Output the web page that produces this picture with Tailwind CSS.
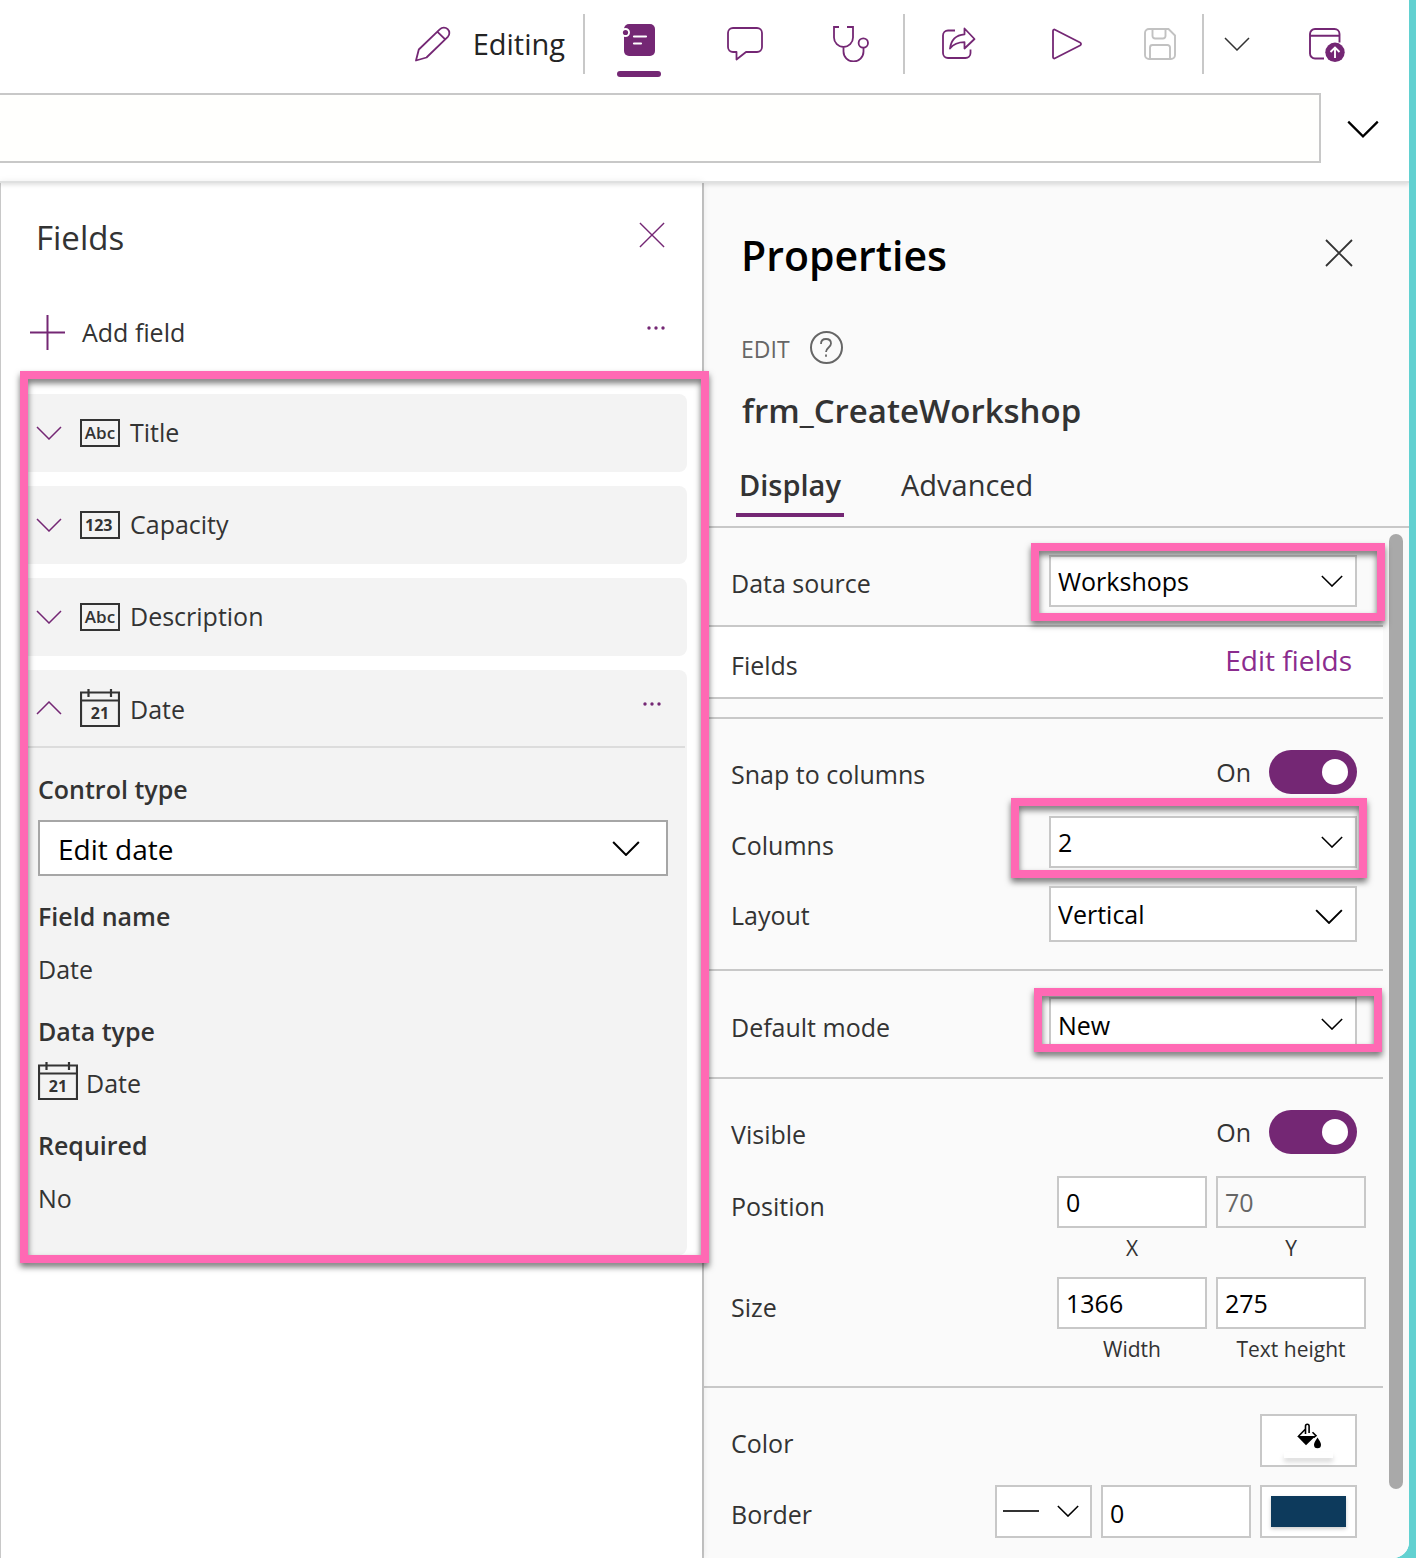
<!DOCTYPE html>
<html lang="en">
<head>
<meta charset="utf-8">
<meta name="viewport" content="width=device-width, initial-scale=1">
<title>Form editor</title>
<script src="https://cdn.jsdelivr.net/npm/@tailwindcss/browser@4"></script>
</head>
<body class="bg-[#62d1d1] font-['Open_Sans','Noto_Sans',sans-serif] text-[25px] text-[#333]">
<svg class="hidden">
  <symbol id="down" viewBox="0 0 26 14"><path d="M1 1l12 12L25 1" fill="none" stroke="currentColor"/></symbol>
  <symbol id="cross" viewBox="0 0 28 28"><path d="M1 1l26 26M27 1L1 27" fill="none" stroke="currentColor"/></symbol>
  <symbol id="dots" viewBox="0 0 18 4"><circle cx="2" cy="2" r="1.7"/><circle cx="9" cy="2" r="1.7"/><circle cx="16" cy="2" r="1.7"/></symbol>
  <symbol id="calendar" viewBox="0 0 40 38"><path d="M1 3.500h38V37H1zM1 11.500h38M8.500 0v8M31 0v8" fill="none" stroke="currentColor" stroke-width="2.200"/></symbol>
</svg>
<div class="mr-[7px] flex min-h-screen flex-col overflow-hidden rounded-br-2xl bg-white">

  <header class="relative z-10 border-b-2 border-[#dfe0e0] pb-[18px] shadow-[0_2px_4px_rgba(0,0,0,0.12)]">
    <div class="mb-[5px] flex h-[88px] items-center justify-end pr-16 text-[#742774]">
      <button class="mr-[18px] flex items-center gap-[22px]">
        <svg class="size-9" viewBox="0 0 36 36" fill="none" stroke="currentColor" stroke-width="1.800" stroke-linejoin="round"><path d="M1 34.500l2.800-11L25 3.200a5.300 5.300 0 0 1 7.800 7.600L11.500 31.500zM22.500 5.800l7.700 7.600"/></svg>
        <span class="text-[29px] leading-9 text-[#242424]">Editing</span>
      </button>
      <span class="h-[60px] w-0.5 bg-[#c8c8c8]"></span>
      <div class="flex items-center gap-[62px] pr-[30px] pl-8">
        <button class="flex w-11 flex-col items-center gap-[15px] pt-[13px]" aria-label="Properties pane">
          <svg class="h-8 w-[34px]" viewBox="0 0 34 32"><rect x="2" width="31" height="32" rx="5" fill="currentColor"/><circle cx="3.500" cy="8.500" r="4.500" fill="#fff"/><circle cx="3.500" cy="8.500" r="2.600" fill="currentColor"/><path d="M12 12.500h12M12 19.500h7" stroke="#fff" stroke-width="2.200" stroke-linecap="round"/></svg>
          <span class="h-1.5 w-11 rounded-full bg-[#742774]"></span>
        </button>
        <button class="flex w-11 justify-center" aria-label="Comments">
          <svg class="size-9" viewBox="0 0 36 36" fill="none" stroke="currentColor" stroke-width="1.800" stroke-linejoin="round"><path d="M6 2h24a5 5 0 0 1 5 5v14a5 5 0 0 1-5 5H19l-9.500 7.500V26H6a5 5 0 0 1-5-5V7a5 5 0 0 1 5-5z"/></svg>
        </button>
        <button class="flex w-11 justify-center" aria-label="App checker">
          <svg class="size-9" viewBox="0 0 36 36" fill="none" stroke="currentColor" stroke-width="1.800"><path d="M6 1H1v10.500a9.500 9.500 0 0 0 19 0V1h-6M10.500 21v4.500a10 10 0 0 0 20 0V22"/><circle cx="30.300" cy="17" r="4.700"/></svg>
        </button>
      </div>
      <span class="h-[60px] w-0.5 bg-[#c8c8c8]"></span>
      <button class="ml-8 flex w-11 justify-center" aria-label="Share">
        <svg class="size-9" viewBox="0 0 36 36" fill="none" stroke="currentColor" stroke-width="1.800" stroke-linejoin="round"><path d="M14 4.500H7a5 5 0 0 0-5 5V27a5 5 0 0 0 5 5h17.500a5 5 0 0 0 5-5v-3.500"/><path d="M23.500 2.500l10 10.500-10 9.500v-6.300c-6 0-10.500 1.300-14.500 6.300C10 14 15 9 23.500 8.300z"/></svg>
      </button>
      <button class="ml-16 flex w-11 justify-center" aria-label="Preview">
        <svg class="size-8" viewBox="0 0 32 32" fill="none" stroke="currentColor" stroke-width="1.800" stroke-linejoin="round"><path d="M2 3v26c0 1.200 1 1.800 2 1.300l25-12.800c1.400-.8 1.400-2.200 0-3L4 1.700C3 1.200 2 1.800 2 3z"/></svg>
      </button>
      <button class="mr-5 ml-[49px] flex w-11 justify-center text-[#c2c2c2]" aria-label="Save" disabled>
        <svg class="size-8" viewBox="0 0 32 32" fill="none" stroke="currentColor" stroke-width="1.900"><path d="M5 1h19.500L31 7.500V27a4 4 0 0 1-4 4H5a4 4 0 0 1-4-4V5a4 4 0 0 1 4-4z"/><path d="M8.500 1v7a2.500 2.500 0 0 0 2.500 2.500h8A2.500 2.500 0 0 0 21.500 8V1M6 31V19.500A2.500 2.500 0 0 1 8.500 17h15a2.500 2.500 0 0 1 2.500 2.500V31"/></svg>
      </button>
      <span class="h-[60px] w-0.5 bg-[#c8c8c8]"></span>
      <button class="ml-5 text-[#333]" aria-label="Save options"><svg class="h-3.5 w-[26px] stroke-[1.500]"><use href="#down"/></svg></button>
      <button class="ml-[59px]" aria-label="Publish">
        <svg class="size-9" viewBox="0 0 36 36"><path d="M15 32.500H6a5 5 0 0 1-5-5V8a5 5 0 0 1 5-5h19.500a5 5 0 0 1 5 5v8.500M1 9.800h29.500" fill="none" stroke="currentColor" stroke-width="1.900"/><circle cx="26" cy="26.300" r="9.700" fill="currentColor"/><path d="M26 32v-10.500M21.500 26l4.500-4.500 4.500 4.500" fill="none" stroke="#fff" stroke-width="1.900"/></svg>
      </button>
    </div>
    <div class="flex">
      <input type="text" aria-label="Formula" class="h-[70px] min-w-0 flex-1 border-2 border-l-0 border-[#c8c8c8] bg-[#fffffd] px-4">
      <button class="flex w-[88px] items-center justify-center pt-0.5 pr-1 text-black" aria-label="Expand formula bar"><svg class="h-[18px] w-8 stroke-[1.800]"><use href="#down"/></svg></button>
    </div>
  </header>

  <main class="flex flex-1">
    <section class="relative z-[1] min-w-0 flex-1 border-l border-[#c8c8c8] shadow-[0_0_8px_rgba(0,0,0,0.12)]">
      <div class="flex items-start justify-between pt-[31px] pr-[37px] pl-[35px]">
        <h2 class="text-[33px] leading-12">Fields</h2>
        <button class="mt-2 text-[#742774]" aria-label="Close fields"><svg class="size-[26px] stroke-[1.500]"><use href="#cross"/></svg></button>
      </div>
      <div class="mt-[52px] flex items-center justify-between pr-[37px] pl-[29px]">
        <button class="flex items-center gap-[17px] leading-9"><svg class="size-[35px] text-[#742774]" viewBox="0 0 35 35"><path d="M17.500 0v35M0 17.500h35" stroke="currentColor" stroke-width="2"/></svg>Add field</button>
        <button class="pb-2" aria-label="More field options"><svg class="h-1 w-[18px] fill-[#742774]"><use href="#dots"/></svg></button>
      </div>

      <div class="relative mt-11 mr-[15px] ml-[27px]">
        <ul class="space-y-3.5">
          <li><button class="flex h-[78px] w-full items-center rounded-r-lg bg-[#f3f3f3] pl-2"><svg class="h-3.5 w-[26px] stroke-[1.500] text-[#742774]"><use href="#down"/></svg><span class="mr-2.5 ml-[18px] flex h-7 w-10 items-center justify-center border-2 border-[#333] text-[17px] font-semibold">Abc</span>Title</button></li>
          <li><button class="flex h-[78px] w-full items-center rounded-r-lg bg-[#f3f3f3] pl-2"><svg class="h-3.5 w-[26px] stroke-[1.500] text-[#742774]"><use href="#down"/></svg><span class="mr-2.5 ml-[18px] flex h-7 w-10 items-center border-2 border-[#333] pl-[3px] text-base font-bold">123</span>Capacity</button></li>
          <li><button class="flex h-[78px] w-full items-center rounded-r-lg bg-[#f3f3f3] pl-2"><svg class="h-3.5 w-[26px] stroke-[1.500] text-[#742774]"><use href="#down"/></svg><span class="mr-2.5 ml-[18px] flex h-7 w-10 items-center justify-center border-2 border-[#333] text-[17px] font-semibold">Abc</span>Description</button></li>
          <li class="rounded-r-lg bg-[#f3f3f3]">
            <div class="mr-0.5 flex h-[78px] items-center border-b-2 border-[#dcdcdc] pr-6 pl-2">
              <button class="flex flex-1 items-center"><svg class="h-3.5 w-[26px] rotate-180 stroke-[1.500] text-[#742774]"><use href="#down"/></svg><span class="mr-2.5 ml-[18px] grid"><svg class="col-start-1 row-start-1 h-[38px] w-10"><use href="#calendar"/></svg><span class="col-start-1 row-start-1 self-end pb-0.5 text-center text-base font-bold">21</span></span><span class="pt-[3px]">Date</span></button>
              <button class="pb-2" aria-label="More options for Date"><svg class="h-1 w-[18px] fill-[#742774]"><use href="#dots"/></svg></button>
            </div>
            <div class="pt-[25px] pr-[19px] pb-[41px] pl-2.5 leading-8">
              <label for="ctype" class="block font-semibold">Control type</label>
              <div class="relative mt-[15px]">
                <select id="ctype" class="h-14 w-full appearance-none border-2 border-[#a6a6a6] bg-white pt-0.5 pl-[18px] text-[28px] text-black"><option>Edit date</option></select>
                <svg class="pointer-events-none absolute top-[21px] right-7 h-[15px] w-7 stroke-[1.900] text-black"><use href="#down"/></svg>
              </div>
              <h3 class="mt-6 font-semibold">Field name</h3>
              <p class="mt-[21px]">Date</p>
              <h3 class="mt-[30px] font-semibold">Data type</h3>
              <p class="mt-3.5 flex h-10 items-center gap-2"><span class="grid"><svg class="col-start-1 row-start-1 h-[38px] w-10"><use href="#calendar"/></svg><span class="col-start-1 row-start-1 self-end pb-0.5 text-center text-base leading-6 font-bold">21</span></span><span class="pt-[3px]">Date</span></p>
              <h3 class="mt-7 font-semibold">Required</h3>
              <p class="mt-[21px]">No</p>
            </div>
          </li>
        </ul>
        <div class="pointer-events-none absolute -top-[23px] -right-[22px] -bottom-2 -left-2 border-8 border-[#ff69b4] drop-shadow-[0_4px_3px_rgba(0,0,0,0.55)]"></div>
      </div>
    </section>

    <section class="flex w-[707px] shrink-0 flex-col border-l-2 border-[#c8c8c8] bg-[#fafafa]">
      <div class="flex items-start justify-between pt-[42px] pr-14 pl-[37px]">
        <h2 class="text-[41px] leading-[60px] font-semibold text-black">Properties</h2>
        <button class="mt-3.5" aria-label="Close properties"><svg class="size-7 stroke-[1.800]"><use href="#cross"/></svg></button>
      </div>
      <div class="mt-11 flex items-center gap-5 pl-[37px] leading-9 text-[#666]">
        <span class="pt-1 text-[23px] leading-8">EDIT</span>
        <button class="flex size-[33px] items-center justify-center rounded-full border-2 border-[#666]" aria-label="Help"><svg class="h-[19px] w-3" viewBox="0 0 12 19" fill="none" stroke="currentColor" stroke-width="1.800"><path d="M1 6C1 2.800 3 1 6 1s5 1.800 5 4.500c0 4-5 4-5 8.500M6 16.500v2.300"/></svg></button>
      </div>
      <h3 class="mt-[22px] pl-[38px] text-[33px] leading-12 font-semibold">frm_CreateWorkshop</h3>
      <div role="tablist" class="mt-[22px] flex gap-[54px] border-b-2 border-[#c8c8c8] pb-[9px] pl-8 text-[29px] leading-[56px]">
        <button role="tab" aria-selected="true" class="border-b-4 border-[#742774] px-[3px] font-semibold">Display</button>
        <button role="tab" aria-selected="false" class="border-b-4 border-transparent px-[3px]">Advanced</button>
      </div>

      <div class="flex flex-1">
        <form class="min-w-0 flex-1">
          <div class="flex items-center justify-between border-b-2 border-[#c8c8c8] pt-[27px] pr-[26px] pb-[18px] pl-[27px]">
            <label for="source" class="pt-1.5">Data source</label>
            <div class="relative w-[308px]">
              <select id="source" class="h-[52px] w-full appearance-none border-2 border-[#c8c8c8] bg-white pt-0.5 pl-[7px] text-black"><option>Workshops</option></select>
              <svg class="pointer-events-none absolute top-5 right-3.5 h-3 w-[22px] stroke-[1.800] text-black"><use href="#down"/></svg>
              <div class="pointer-events-none absolute -top-3 -right-7 -bottom-3.5 -left-[18px] z-10 border-8 border-[#ff69b4] drop-shadow-[0_4px_3px_rgba(0,0,0,0.55)]"></div>
            </div>
          </div>
          <div class="flex h-[72px] items-center justify-between border-b-2 border-[#c8c8c8] bg-white pr-[31px] pl-[27px]">
            <span class="pt-2">Fields</span>
            <a href="#" class="pb-1 text-[28px] text-[#8b2c8e]">Edit fields</a>
          </div>

          <div class="mt-[18px] border-y-2 border-[#c8c8c8] pt-[31px] pr-[26px] pb-[27px] pl-[27px]">
            <div class="flex h-11 items-center">
              <label for="snap" class="flex-1 pt-1.5">Snap to columns</label>
              <span class="mr-[18px] pt-0.5">On</span>
              <span class="relative h-11"><input id="snap" type="checkbox" role="switch" checked class="h-11 w-[88px] appearance-none rounded-full bg-[#742774]"><span class="pointer-events-none absolute top-[9px] right-[9px] size-[26px] rounded-full bg-white"></span></span>
            </div>
            <div class="mt-[22px] flex items-center justify-between">
              <label for="columns" class="pt-2">Columns</label>
              <div class="relative w-[308px]">
                <select id="columns" class="h-[52px] w-full appearance-none border-2 border-[#c8c8c8] bg-white pt-0.5 pl-[7px] text-black"><option>2</option></select>
                <svg class="pointer-events-none absolute top-5 right-3.5 h-3 w-[22px] stroke-[1.800] text-black"><use href="#down"/></svg>
                <div class="pointer-events-none absolute -top-[18px] -right-2.5 -bottom-2.5 -left-[38px] border-8 border-[#ff69b4] drop-shadow-[0_4px_3px_rgba(0,0,0,0.55)]"></div>
              </div>
            </div>
            <div class="mt-[18px] flex items-center justify-between">
              <label for="layout" class="pt-1">Layout</label>
              <div class="relative w-[308px]">
                <select id="layout" class="h-14 w-full appearance-none border-2 border-[#c8c8c8] bg-white pt-0.5 pl-[7px] text-black"><option>Vertical</option></select>
                <svg class="pointer-events-none absolute top-[23px] right-3.5 h-[15px] w-7 stroke-[1.800] text-black"><use href="#down"/></svg>
              </div>
            </div>
          </div>

          <div class="flex items-center justify-between border-b-2 border-[#c8c8c8] pt-[26px] pr-[26px] pb-7 pl-[27px]">
            <label for="mode" class="pt-2.5">Default mode</label>
            <div class="relative w-[308px]">
              <select id="mode" class="h-[52px] w-full appearance-none border-2 border-[#c8c8c8] bg-white pt-1.5 pl-[7px] text-black"><option>New</option></select>
              <svg class="pointer-events-none absolute top-[21px] right-3.5 h-3 w-[22px] stroke-[1.800] text-black"><use href="#down"/></svg>
              <div class="pointer-events-none absolute -top-[9px] -right-[25px] -bottom-[3px] -left-[15px] border-8 border-[#ff69b4] drop-shadow-[0_4px_3px_rgba(0,0,0,0.55)]"></div>
            </div>
          </div>

          <div class="border-b-2 border-[#c8c8c8] pt-[31px] pb-[23px] pl-[27px]">
            <div class="flex h-11 items-center pr-[26px]">
              <label for="visible" class="flex-1 pt-1.5">Visible</label>
              <span class="mr-[18px] pt-0.5">On</span>
              <span class="relative h-11"><input id="visible" type="checkbox" role="switch" checked class="h-11 w-[88px] appearance-none rounded-full bg-[#742774]"><span class="pointer-events-none absolute top-[9px] right-[9px] size-[26px] rounded-full bg-white"></span></span>
            </div>
            <div class="mt-[22px] flex gap-[9px] pr-[17px]">
              <span class="flex-1 pt-1 leading-[52px]">Position</span>
              <label class="flex w-[150px] flex-col gap-1.5 text-center text-[21px] leading-7"><input type="text" value="0" class="h-[52px] w-full border-2 border-[#c8c8c8] bg-white px-[7px] text-[25px] text-black">X</label>
              <label class="flex w-[150px] flex-col gap-1.5 text-center text-[21px] leading-7"><input type="text" value="70" disabled class="h-[52px] w-full border-2 border-[#c8c8c8] px-[7px] text-[25px] text-[#666]">Y</label>
            </div>
            <div class="mt-[15px] flex gap-[9px] pr-[17px]">
              <span class="flex-1 pt-1 leading-[52px]">Size</span>
              <label class="flex w-[150px] flex-col gap-1.5 text-center text-[21px] leading-7"><input type="text" value="1366" class="h-[52px] w-full border-2 border-[#c8c8c8] bg-white px-[7px] text-[25px] text-black">Width</label>
              <label class="flex w-[150px] flex-col gap-1.5 text-center text-[21px] leading-7"><input type="text" value="275" class="h-[52px] w-full border-2 border-[#c8c8c8] bg-white px-[7px] text-[25px] text-black">Text height</label>
            </div>
          </div>

          <div class="pt-[26px] pr-[26px] pb-[19px] pl-[27px]">
            <div class="flex items-center justify-between">
              <span class="pt-1.5">Color</span>
              <button type="button" class="flex h-[53px] w-[97px] flex-col items-center border-2 border-[#c8c8c8] bg-white pt-[7px]" aria-label="Fill color">
                <svg class="h-[26px] w-6" viewBox="0 0 24 26"><path d="M8.500 11V3.200c0-2.700 3.600-2.700 3.600 0V10M8.500 6L1.500 13.200M15.500 9.200l3.500 3.500-2.500 2" fill="none" stroke="#000" stroke-width="1.600"/><path d="M0 13h18.500L9 22.300zM20.500 14.500c2 3.500 3.500 5 3.500 7.200a3.500 3.500 0 0 1-7 0c0-2.200 1.500-3.700 3.500-7.200z"/></svg>
                <span class="mt-[3px] h-1.5 w-[49px] bg-white shadow-[0_4px_5px_rgba(0,0,0,0.15)]"></span>
              </button>
            </div>
            <div class="mt-[18px] flex items-center gap-[9px]">
              <span class="flex-1 pt-1.5">Border</span>
              <div class="relative">
                <select aria-label="Border style" class="h-[53px] w-[97px] appearance-none border-2 border-[#c8c8c8] bg-white"><option value="solid" aria-label="Solid"></option></select>
                <span class="pointer-events-none absolute top-[25px] left-2 h-0.5 w-9 bg-[#333]"></span>
                <svg class="pointer-events-none absolute top-5 right-[13px] h-3 w-[22px] stroke-[1.800] text-black"><use href="#down"/></svg>
              </div>
              <input type="text" aria-label="Border width" value="0" class="h-[53px] w-[150px] border-2 border-[#c8c8c8] bg-white px-[7px] pt-0.5 text-black">
              <button type="button" aria-label="Border color" class="flex h-[53px] w-[97px] items-start justify-center border-2 border-[#c8c8c8] bg-white pt-[9px]"><span class="h-[31px] w-[75px] bg-[#0d3a5c] shadow-[0_2px_4px_rgba(0,0,0,0.2)]"></span></button>
            </div>
          </div>
        </form>
        <div class="flex w-[26px] flex-col pt-1.5 pb-[69px] pl-1.5"><span class="w-3.5 flex-1 rounded-full bg-[#a9a9a9]"></span></div>
      </div>
    </section>
  </main>
</div>
</body>
</html>
